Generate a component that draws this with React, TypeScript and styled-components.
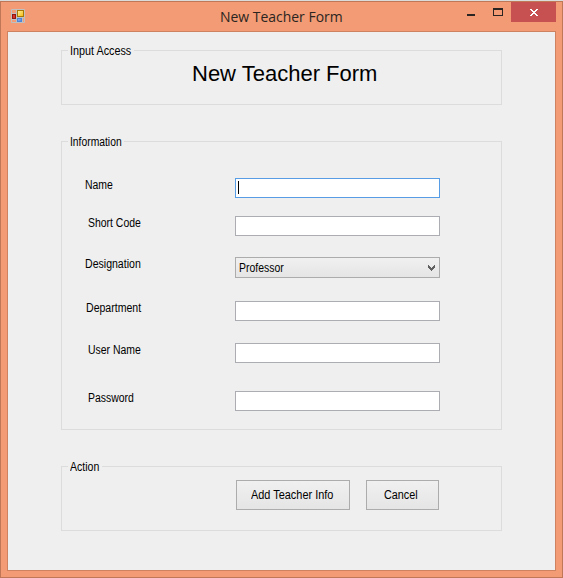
import React from "react";
import styled, { createGlobalStyle } from "styled-components";

const GlobalStyle = createGlobalStyle`
  * { box-sizing: border-box; }
  body { margin: 0; background: #d9dcdb; overflow: hidden; }
`;

const Window = styled.div`
  width: 563px;
  height: 577px;
  margin-top: 1px;
  border: 1px solid #bf7757;
  background: #f29b74;
  display: flex;
  flex-direction: column;
  padding: 0 6px 6px;
  font-family: "Liberation Sans", Arial, sans-serif;
  font-size: 12px;
  line-height: 14px;
  color: #000;
`;

const TitleBar = styled.header`
  height: 29px;
  flex: none;
  display: grid;
  grid-template-columns: 213px 1fr 100px;
  align-items: start;
`;

const AppIcon = styled.svg`
  display: block;
  margin: 7px 0 0 4px;
`;

const WindowTitle = styled.h1`
  margin: 3px 0 0;
  font: 400 15px/22px "Open Sans", "Noto Sans", sans-serif;
  color: #2b2522;
  white-space: nowrap;
  transform: scaleX(0.93);
  transform-origin: 0 0;
`;

const WindowControls = styled.div`
  display: flex;
`;

const ControlButton = styled.button<{ $width: number; $close?: boolean }>`
  width: ${(p) => p.$width}px;
  height: 20px;
  padding: 0;
  border: 0;
  background: ${(p) => (p.$close ? "#c75050" : "transparent")};
  svg { display: block; }
`;

const Client = styled.main`
  flex: 1;
  width: 549px;
  border: 1px solid #cf8260;
  background: #efefef;
  padding: 18px 53px 0;
`;

const GroupBox = styled.section<{ $height: number; $gap?: number }>`
  width: 441px;
  height: ${(p) => p.$height}px;
  margin-top: ${(p) => p.$gap ?? 0}px;
  border: 1px solid #dcdcdc;
  display: flex;
  flex-direction: column;
`;

const Legend = styled.h2<{ $width: number }>`
  width: ${(p) => p.$width}px;
  height: 14px;
  margin: -7px 0 0 6px;
  padding-left: 2px;
  background: #efefef;
  font: inherit;
  flex: none;
`;

const Caption = styled.span<{ $scale: number }>`
  display: block;
  white-space: nowrap;
  transform: scaleX(${(p) => p.$scale});
  transform-origin: 0 0;
`;

const Heading = styled.h2`
  margin: 4px 0 0 130px;
  font-size: 22px;
  font-weight: 400;
  line-height: 24px;
  white-space: nowrap;
`;

const FieldRow = styled.label<{ $gap: number; $indent: number }>`
  display: grid;
  grid-template-columns: ${(p) => 173 - p.$indent}px 205px;
  align-items: start;
  margin-top: ${(p) => p.$gap}px;
  padding-left: ${(p) => p.$indent}px;
`;

const TextBox = styled.div<{ $focused?: boolean }>`
  height: 20px;
  border: 1px solid ${(p) => (p.$focused ? "#569de5" : "#abadb3")};
  background: #fff;
  padding: 2px;
`;

const Caret = styled.span`
  display: block;
  width: 1px;
  height: 13px;
  background: #000;
`;

const ComboBox = styled.div`
  height: 21px;
  border: 1px solid #acacac;
  background: linear-gradient(#f0f0f0, #e5e5e5);
  padding: 3px 4px 0 3px;
  display: flex;
  justify-content: space-between;
  svg { display: block; margin-top: 4px; }
`;

const Actions = styled.div`
  display: flex;
  gap: 16px;
  margin: 6px 0 0 174px;
`;

const PushButton = styled.button<{ $width: number; $inset: number }>`
  width: ${(p) => p.$width}px;
  height: 30px;
  padding: 0 0 0 ${(p) => p.$inset}px;
  border: 1px solid #acacac;
  border-radius: 0;
  background: linear-gradient(#f0f0f0, #e5e5e5);
  font: inherit;
  color: #000;
  text-align: left;
`;

type Field = {
  label: string;
  scale: number;
  indent: number;
  gap: number;
  kind?: "focused" | "combo";
};

const fields: Field[] = [
  { label: "Name", scale: 0.87, indent: 23, gap: 29, kind: "focused" },
  { label: "Short Code", scale: 0.87, indent: 26, gap: 18 },
  { label: "Designation", scale: 0.88, indent: 23, gap: 21, kind: "combo" },
  { label: "Department", scale: 0.88, indent: 24, gap: 23 },
  { label: "User Name", scale: 0.87, indent: 26, gap: 22 },
  { label: "Password", scale: 0.87, indent: 26, gap: 28 },
];

function FieldControl({ kind }: { kind?: Field["kind"] }) {
  if (kind === "combo") {
    return (
      <ComboBox>
        <Caption $scale={0.87}>Professor</Caption>
        <svg width="7" height="6" shapeRendering="crispEdges">
          <path
            d="M0 0h1v1h1v1h1v1h1v-1h1v-1h1v-1h1v3h-1v1h-1v1h-1v1h-1v-1h-1v-1h-1v-1h-1z"
            fill="#606060"
          />
        </svg>
      </ComboBox>
    );
  }
  return (
    <TextBox $focused={kind === "focused"}>{kind === "focused" && <Caret />}</TextBox>
  );
}

function FormIcon() {
  return (
    <AppIcon width="14" height="14" viewBox="0 0 14 14">
      <defs>
        <linearGradient id="gold" x1="0" y1="0" x2="1" y2="1">
          <stop offset="0" stopColor="#fff3a0" />
          <stop offset="1" stopColor="#f3b80c" />
        </linearGradient>
        <linearGradient id="blue" x1="0" y1="0" x2="1" y2="1">
          <stop offset="0" stopColor="#9cc4ff" />
          <stop offset="1" stopColor="#3d78dc" />
        </linearGradient>
      </defs>
      <path
        d="M.5 .5h13v13H.5zM5.5 0v14M0 4.5h5M0 10.5h5M5 8.5h9M11.5 8v6"
        fill="none"
        stroke="#bfc0c2"
      />
      <rect x="1.5" y="5.5" width="3" height="4" fill="#d83328" stroke="#8f1713" />
      <rect x="6.5" y="1.5" width="6" height="6" fill="url(#gold)" stroke="#a77808" />
      <rect x="6.5" y="9.5" width="4" height="3" fill="url(#blue)" stroke="#4f83d4" />
    </AppIcon>
  );
}

export default function App() {
  return (
    <>
      <GlobalStyle />
      <Window>
        <TitleBar>
          <FormIcon />
          <WindowTitle>New Teacher Form</WindowTitle>
          <WindowControls>
            <ControlButton $width={26} aria-label="Minimize">
              <svg width="26" height="20">
                <rect x="11" y="12" width="8" height="2" fill="#2a2522" />
              </svg>
            </ControlButton>
            <ControlButton $width={29} aria-label="Maximize">
              <svg width="29" height="20" shapeRendering="crispEdges">
                <path d="M11 6h10v8h-10zM12 8v5h8v-5z" fill="#2a2522" fillRule="evenodd" />
              </svg>
            </ControlButton>
            <ControlButton $width={45} $close aria-label="Close">
              <svg width="45" height="20" shapeRendering="crispEdges">
                <path
                  d="M19 7h2v1h1v1h2v-1h1v-1h2v1h-1v1h-1v1h-1v1h1v1h1v1h1v1h-2v-1h-1v-1h-2v1h-1v1h-2v-1h1v-1h1v-1h1v-1h-1v-1h-1v-1h-1z"
                  fill="#fff"
                />
              </svg>
            </ControlButton>
          </WindowControls>
        </TitleBar>
        <Client>
          <GroupBox $height={55}>
            <Legend $width={66}>
              <Caption $scale={0.9}>Input Access</Caption>
            </Legend>
            <Heading>New Teacher Form</Heading>
          </GroupBox>
          <GroupBox $height={289} $gap={36}>
            <Legend $width={56}>
              <Caption $scale={0.86}>Information</Caption>
            </Legend>
            {fields.map((f) => (
              <FieldRow key={f.label} $gap={f.gap} $indent={f.indent}>
                <Caption $scale={f.scale}>{f.label}</Caption>
                <FieldControl kind={f.kind} />
              </FieldRow>
            ))}
          </GroupBox>
          <GroupBox $height={65} $gap={36}>
            <Legend $width={34}>
              <Caption $scale={0.88}>Action</Caption>
            </Legend>
            <Actions>
              <PushButton $width={114} $inset={14}>
                <Caption $scale={0.91}>Add Teacher Info</Caption>
              </PushButton>
              <PushButton $width={73} $inset={17}>
                <Caption $scale={0.9}>Cancel</Caption>
              </PushButton>
            </Actions>
          </GroupBox>
        </Client>
      </Window>
    </>
  );
}
